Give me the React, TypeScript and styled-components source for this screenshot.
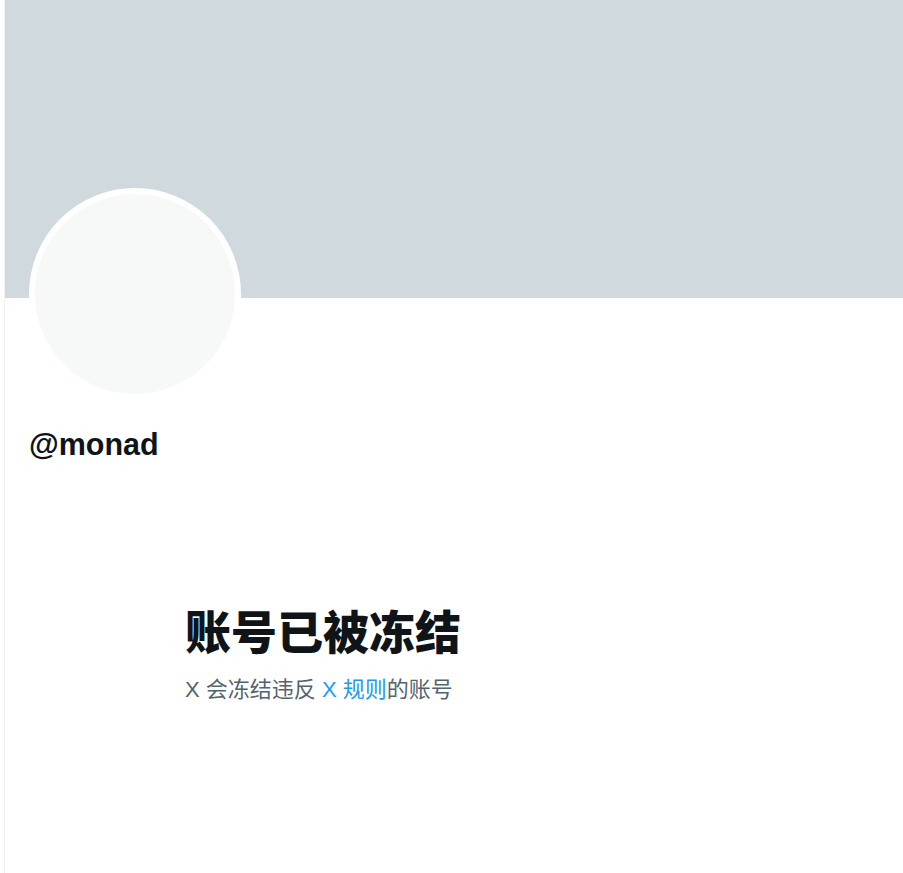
import React from "react";
import styled, { createGlobalStyle } from "styled-components";

const GlobalStyle = createGlobalStyle`
  html, body {
    margin: 0;
    padding: 0;
    background: #ffffff;
  }
  body {
    font-family: "Liberation Sans", Arial, "Noto Sans CJK SC", sans-serif;
    color: #0f1419;
  }
`;

const Page = styled.div`
  margin-left: 4px;
  min-height: 100vh;
  border-left: 1px solid #eff3f4;
  display: flex;
  flex-direction: column;
`;

const Banner = styled.div`
  height: 298px;
  background: #cfd9de;
`;

const ProfileHeader = styled.div`
  padding: 0 24px;
  display: flex;
  flex-direction: column;
  align-items: flex-start;
`;

const Avatar = styled.div`
  width: 200px;
  height: 200px;
  margin-top: -110px;
  border: 6px solid #ffffff;
  border-radius: 50%;
  background: #f7f9f9;
`;

const Handle = styled.div`
  margin-top: 26px;
  font-size: 30.5px;
  line-height: 36px;
  font-weight: 700;
  color: #0f1419;
`;

const EmptyState = styled.div`
  width: 538px;
  margin: 144px auto 0;
  display: flex;
  flex-direction: column;
`;

const Title = styled.h1`
  margin: 0;
  font-family: "Liberation Sans", Arial, "Noto Sans CJK SC", sans-serif;
  font-size: 46px;
  line-height: 54px;
  font-weight: 800;
  color: #0f1419;
`;

const Subtitle = styled.p`
  margin: 15px 0 0;
  font-family: "Liberation Sans", Arial, "Noto Sans CJK SC", sans-serif;
  font-size: 22px;
  line-height: 30px;
  color: #536471;
`;

const RuleLink = styled.a`
  color: #1d9bf0;
  text-decoration: none;
`;

export default function App() {
  return (
    <>
      <GlobalStyle />
      <Page>
        <Banner />
        <ProfileHeader>
          <Avatar />
          <Handle>@monad</Handle>
        </ProfileHeader>
        <EmptyState>
          <Title>账号已被冻结</Title>
          <Subtitle>
            X 会冻结违反 <RuleLink href="#">X 规则</RuleLink>的账号
          </Subtitle>
        </EmptyState>
      </Page>
    </>
  );
}
